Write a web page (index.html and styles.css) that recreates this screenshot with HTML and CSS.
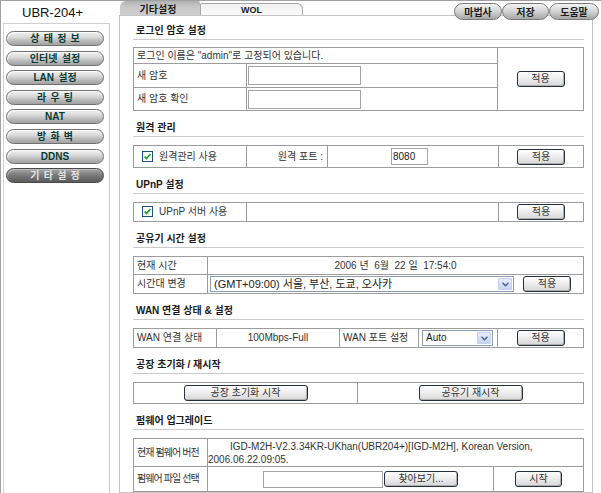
FILE: index.html
```html
<!DOCTYPE html>
<html lang="ko">
<head>
<meta charset="utf-8">
<title>UBR-204+ 기타설정</title>
<link rel="stylesheet" href="styles.css">
</head>
<body>
<div class="page">
  <aside class="side">
    <div class="brand">UBR-204+</div>
    <nav class="menu">
      <a class="mbtn">상 태 정 보</a>
      <a class="mbtn">인터넷 설정</a>
      <a class="mbtn">LAN 설정</a>
      <a class="mbtn">라 우 팅</a>
      <a class="mbtn">NAT</a>
      <a class="mbtn">방 화 벽</a>
      <a class="mbtn">DDNS</a>
      <a class="mbtn on">기 타 설 정</a>
    </nav>
  </aside>
  <main class="main">
    <div class="topbar">
      <div class="tabs">
        <span class="tab tab-on">기타설정</span>
        <span class="tab tab-off">WOL</span>
      </div>
      <div class="tools">
        <span class="pill p1">마법사</span><span class="pill p2">저장</span><span class="pill p3">도움말</span>
      </div>
    </div>
    <div class="panel">
      <section class="sec first">
        <h2 class="sec-title">로그인 암호 설정</h2>
        <table class="grid">
          <colgroup><col class="c113"><col><col class="c86"></colgroup>
          <tr class="r16"><td colspan="2">로그인 이름은 "admin"로 고정되어 있습니다.</td><td rowspan="3" class="ctr"><button class="btn b48">적용</button></td></tr>
          <tr class="r24"><td>새 암호</td><td class="p1"><input class="field f113" type="password"></td></tr>
          <tr class="r23"><td>새 암호 확인</td><td class="p1"><input class="field f113" type="password"></td></tr>
        </table>
      </section>

      <section class="sec">
        <h2 class="sec-title">원격 관리</h2>
        <table class="grid">
          <colgroup><col class="c113"><col class="c81"><col><col class="c85"></colgroup>
          <tr class="r22">
            <td class="chk"><span class="cb"><svg width="11" height="11" viewBox="0 0 11 11"><rect x="0.5" y="0.5" width="10" height="10" fill="#fff" stroke="#1c5180"/><polyline points="2.5,5.5 4.5,7.5 8.5,3" fill="none" stroke="#21a121" stroke-width="1.7"/></svg></span>원격관리 사용</td>
            <td class="rt">원격 포트 :</td>
            <td class="ctr"><input class="field f37" type="text" value="8080"></td>
            <td class="ctr"><button class="btn b48">적용</button></td>
          </tr>
        </table>
      </section>

      <section class="sec">
        <h2 class="sec-title">UPnP 설정</h2>
        <table class="grid">
          <colgroup><col class="c113"><col><col class="c85"></colgroup>
          <tr class="r19">
            <td class="chk"><span class="cb"><svg width="11" height="11" viewBox="0 0 11 11"><rect x="0.5" y="0.5" width="10" height="10" fill="#fff" stroke="#1c5180"/><polyline points="2.5,5.5 4.5,7.5 8.5,3" fill="none" stroke="#21a121" stroke-width="1.7"/></svg></span>UPnP 서버 사용</td>
            <td></td>
            <td class="ctr"><button class="btn b48">적용</button></td>
          </tr>
        </table>
      </section>

      <section class="sec">
        <h2 class="sec-title">공유기 시간 설정</h2>
        <table class="grid">
          <colgroup><col class="c74"><col></colgroup>
          <tr class="r18"><td>현재 시간</td><td class="ctr">2006 년&nbsp; 6월&nbsp; 22 일&nbsp; 17:54:0</td></tr>
          <tr class="r19"><td>시간대 변경</td>
            <td class="p2">
              <div class="tzrow">
                <div class="select s304"><span class="select-val">(GMT+09:00) 서울, 부산, 도쿄, 오사카</span><span class="select-arrow"><svg width="7" height="5" viewBox="0 0 7 5"><polyline points="0.5,0.8 3.5,3.8 6.5,0.8" fill="none" stroke="#4d6185" stroke-width="1.4"/></svg></span></div>
                <button class="btn b48">적용</button>
              </div>
            </td>
          </tr>
        </table>
      </section>

      <section class="sec">
        <h2 class="sec-title">WAN 연결 상태 &amp; 설정</h2>
        <table class="grid">
          <colgroup><col class="c83"><col class="c123"><col class="c79"><col class="c79"><col></colgroup>
          <tr class="r19">
            <td>WAN 연결 상태</td>
            <td class="ctr">100Mbps-Full</td>
            <td>WAN 포트 설정</td>
            <td class="p2"><div class="select s70"><span class="select-val">Auto</span><span class="select-arrow"><svg width="7" height="5" viewBox="0 0 7 5"><polyline points="0.5,0.8 3.5,3.8 6.5,0.8" fill="none" stroke="#4d6185" stroke-width="1.4"/></svg></span></div></td>
            <td class="ctr"><button class="btn b48">적용</button></td>
          </tr>
        </table>
      </section>

      <section class="sec">
        <h2 class="sec-title">공장 초기화 / 재시작</h2>
        <table class="grid">
          <colgroup><col class="c224"><col></colgroup>
          <tr class="r21">
            <td class="ctr"><button class="btn b124">공장 초기화 시작</button></td>
            <td class="ctr"><button class="btn b104">공유기 재시작</button></td>
          </tr>
        </table>
      </section>

      <section class="sec">
        <h2 class="sec-title">펌웨어 업그레이드</h2>
        <table class="grid">
          <colgroup><col class="c74"><col><col class="c90"></colgroup>
          <tr class="r28"><td class="tight">현재 펌웨어 버전</td><td colspan="2" class="ver">IGD-M2H-V2.3.34KR-UKhan(UBR204+)[IGD-M2H], Korean Version, 2006.06.22.09:05.</td></tr>
          <tr class="r25"><td class="tight">펌웨어 파일 선택</td>
            <td class="filecell"><div class="filerow"><input class="field f120" type="text"><button class="btn b74">찾아보기...</button></div></td>
            <td class="ctr"><button class="btn b47">시작</button></td>
          </tr>
        </table>
      </section>
    </div>
  </main>
</div>
</body>
</html>
```

FILE: styles.css
```css
* { box-sizing: border-box; }
html, body { margin: 0; padding: 0; background: #fff; }
body {
  font-family: "Liberation Sans", "Noto Sans CJK KR", sans-serif;
  font-size: 10px;
  color: #2a2a2a;
}

.page {
  width: 601px;
  height: 493px;
  display: flex;
  border-top: 1px solid #a0a0a0;
  border-left: 1px solid #a0a0a0;
  overflow: hidden;
}

/* ---------- side ---------- */
.side {
  width: 109px;
  flex: none;
  display: flex;
  flex-direction: column;
}
.brand {
  height: 22px;
  font-size: 13px;
  line-height: 22px;
  padding-left: 21px;
  color: #111;
  padding-top: 1px;
}
.menu {
  flex: 1;
  margin-left: 2px;
  width: 107px;
  border: 1px solid #cfcfcf;
  border-bottom: none;
  padding: 7px 0 0 2px;
  display: flex;
  flex-direction: column;
  gap: 4.6px;
}
.mbtn {
  display: block;
  width: 98px;
  height: 15px;
  border: 1px solid #707070;
  border-radius: 8px;
  background: linear-gradient(#f2f2f2 0%, #d9d9d9 40%, #b4b4b4 75%, #a2a2a2 100%);
  box-shadow: inset 1px 1px 0 rgba(255,255,255,0.7);
  text-align: center;
  font-weight: bold;
  font-size: 10px;
  line-height: 13px;
  color: #063a36;
  word-spacing: 1.5px;
}
.mbtn.on {
  background: linear-gradient(#a8a8a8 0%, #7c7c7c 45%, #5a5a5a 100%);
  border-color: #4a4a4a;
  color: #e4e4e4;
  box-shadow: inset 1px 1px 0 rgba(255,255,255,0.3);
}

/* ---------- main ---------- */
.main {
  flex: 1;
  display: flex;
  flex-direction: column;
}
.topbar {
  height: 14px;
  display: flex;
  justify-content: space-between;
  align-items: flex-start;
}
.tabs {
  display: flex;
  margin-left: 10px;
  height: 14px;
  align-items: flex-end;
}
.tab {
  display: flex;
  align-items: center;
  justify-content: center;
  font-weight: bold;
  color: #1a1a1a;
}
.tab-on {
  width: 80px;
  height: 14px;
  border-radius: 6px 2px 0 0;
  background: linear-gradient(#b0b0b0, #c8c8c8 40%, #cdcdcd);
  font-size: 10px;
  padding-right: 4px;
}
.tab-off {
  width: 103px;
  height: 12px;
  border: 1px solid #a8a8a8;
  border-bottom: none;
  border-radius: 2px 6px 0 0;
  background: linear-gradient(#f0f0f0, #fafafa);
  font-size: 9px;
  padding-top: 1px;
}
.tools {
  display: flex;
  margin-top: 2px;
  margin-right: 2px;
  position: relative;
  z-index: 2;
}
.pill {
  height: 17px;
  display: flex;
  align-items: center;
  justify-content: center;
  border: 1px solid #7a7a7a;
  border-radius: 9px;
  background: linear-gradient(#f4f4f4 0%, #d6d6d6 45%, #a6a6a6 100%);
  font-weight: bold;
  font-size: 10px;
  color: #1e1e1e;
}
.p1 { width: 48px; }
.p2 { width: 47px; }
.p3 { width: 50px; }

.panel {
  width: 474px;
  margin-left: 9px;
  flex: 1;
  margin-bottom: 1px;
  border: 1px solid #c4c4c4;
  padding: 0 8px 0 13px;
}

.sec { margin-top: 2px; }
.sec.first { margin-top: 0; }
.sec-title {
  margin: 0;
  height: 24px;
  display: flex;
  align-items: flex-end;
  padding: 0 0 2px 3px;
  font-size: 10px;
  line-height: 12px;
  font-weight: bold;
  color: #1a1a1a;
  border-bottom: 1px solid #cacaca;
}
.grid {
  margin-top: 8px;
  width: 451px;
  border-collapse: collapse;
  table-layout: fixed;
}
.first .grid { margin-top: 7px; }
.grid td {
  border: 1px solid #9c9c9c;
  padding: 0 3px;
  vertical-align: middle;
  line-height: 12px;
  color: #333;
  white-space: nowrap;
}
.grid td.ctr { text-align: center; }
.grid td.rt { text-align: right; padding-right: 4px; }
.grid td.p1 { padding: 0 1px; }
.grid td.p2 { padding: 0 2px; }
.grid td.chk { padding-left: 8px; }
.grid td.tight { letter-spacing: -0.9px; padding-left: 3px; padding-right: 0; }

.c74 { width: 74px; }
.c79 { width: 79px; }
.c81 { width: 81px; }
.c83 { width: 83px; }
.c85 { width: 85px; }
.c86 { width: 86px; }
.c90 { width: 90px; }
.c113 { width: 113px; }
.c123 { width: 123px; }
.c224 { width: 224px; }

.r16 td { height: 16px; }
.r18 td { height: 18px; }
.r19 td { height: 19px; }
.r21 td { height: 21px; }
.r22 td { height: 22px; }
.r23 td { height: 23px; }
.r24 td { height: 24px; }
.r25 td { height: 25px; }
.r28 td { height: 28px; }

.cb {
  display: inline-block;
  width: 11px;
  height: 11px;
  vertical-align: -2px;
  margin-right: 6px;
}
.cb svg { display: block; }

.field {
  display: block;
  height: 19px;
  border: 1px solid #a5a5a5;
  background: #fff;
  font-family: "Liberation Sans", "Noto Sans CJK KR", sans-serif;
  font-size: 10px;
  color: #222;
  padding: 0 1px;
  margin: 0;
  outline: none;
}
.f113 { width: 113px; }
.f37 { width: 37px; height: 17px; margin-left: 60px; }
.f120 { width: 120px; height: 17px; }

.btn {
  height: 16px;
  padding: 0;
  border: 1px solid #25303c;
  border-radius: 3px;
  background: linear-gradient(#ffffff, #ececec 50%, #d6d6d6);
  box-shadow: inset -1px -1px 0 #b0b0b0;
  font-family: "Liberation Sans", "Noto Sans CJK KR", sans-serif;
  font-size: 10px;
  line-height: 12px;
  color: #333;
  vertical-align: middle;
}
.b47 { width: 47px; }
.b48 { width: 48px; }
.b74 { width: 74px; }
.b104 { width: 104px; }
.b124 { width: 124px; }

.tzrow {
  display: flex;
  align-items: center;
  gap: 9px;
}
.select {
  height: 16px;
  border: 1px solid #8a9ab0;
  background: #fff;
  display: flex;
  align-items: center;
  padding: 0 1px 0 3px;
}
.s304 { width: 304px; }
.s70 { width: 71px; margin-left: 1px; }
.select-val {
  flex: 1;
  overflow: hidden;
  white-space: nowrap;
  color: #222;
  font-size: 10px;
}
.s304 .select-val { font-size: 11px; }
.select-arrow {
  width: 14px;
  height: 12px;
  border: 1px solid #c3d0ea;
  border-radius: 1px;
  background: linear-gradient(#e6eefc, #c6d5f4);
  display: flex;
  align-items: center;
  justify-content: center;
}
.select-arrow svg { display: block; }

.grid td.ver {
  white-space: normal;
  text-indent: 22px;
  padding-left: 0;
  line-height: 13px;
}
.grid td.filecell { padding-left: 55px; }
.filerow {
  display: flex;
  align-items: center;
  gap: 1px;
}
```
